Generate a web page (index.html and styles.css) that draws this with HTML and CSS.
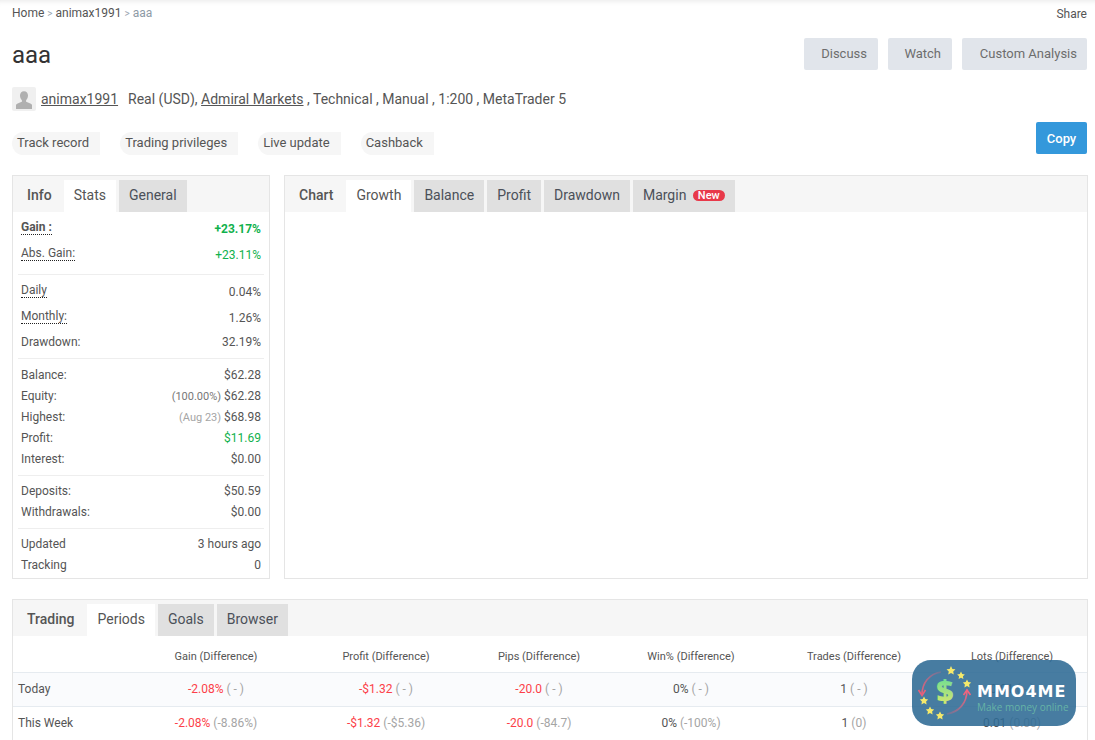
FILE: index.html
```html
<!DOCTYPE html>
<html lang="en">
<head>
<meta charset="utf-8">
<title>aaa</title>
<link rel="stylesheet" href="styles.css">
</head>
<body>
<div class="page">
  <div class="crumbs">
    <div class="crumb-path"><a>Home</a> <span class="sep">&gt;</span> <a>animax1991</a> <span class="sep">&gt;</span> <span class="cur">aaa</span></div>
    <a class="share">Share</a>
  </div>
  <div class="title-row">
    <h1>aaa</h1>
    <div class="actions">
      <button class="btn btn-discuss">Discuss</button>
      <button class="btn btn-watch">Watch</button>
      <button class="btn btn-custom">Custom Analysis</button>
    </div>
  </div>
  <div class="meta">
    <svg class="avatar" viewBox="0 0 24 24" aria-hidden="true">
      <rect width="24" height="24" rx="2" fill="#f0f0f0"/>
      <path d="M12 4.200c2.600 0 4 1.900 4 4.400 0 2-.9 3.700-1.900 4.600v1.600c1.200.7 5 1.500 5.900 3V22H4v-4.200c.9-1.500 4.700-2.300 5.900-3v-1.600C8.900 12.300 8 10.600 8 8.600c0-2.500 1.400-4.400 4-4.400z" fill="#b0b0b0"/>
    </svg>
    <a class="user">animax1991</a>
    <span class="meta-text">Real (USD), <a>Admiral Markets</a> , Technical , Manual , 1:200 , MetaTrader 5</span>
  </div>
  <div class="pill-row">
    <div class="pills">
      <span class="pill">Track record</span>
      <span class="pill">Trading privileges</span>
      <span class="pill">Live update</span>
      <span class="pill">Cashback</span>
    </div>
    <button class="copy">Copy</button>
  </div>
  <div class="main">
    <section class="panel side">
      <div class="tabs">
        <span class="tab label">Info</span>
        <span class="tab active">Stats</span>
        <span class="tab">General</span>
      </div>
      <div class="stats">
        <div class="group first">
          <div class="stat tall"><span class="k dot strong">Gain :</span><span class="v green strong">+23.17%</span></div>
          <div class="stat tall"><span class="k dot">Abs. Gain:</span><span class="v green">+23.11%</span></div>
        </div>
        <div class="group">
          <div class="stat tall"><span class="k dot">Daily</span><span class="v">0.04%</span></div>
          <div class="stat tall"><span class="k dot">Monthly:</span><span class="v">1.26%</span></div>
          <div class="stat mid"><span class="k">Drawdown:</span><span class="v">32.19%</span></div>
        </div>
        <div class="group wide">
          <div class="stat"><span class="k">Balance:</span><span class="v">$62.28</span></div>
          <div class="stat"><span class="k">Equity:</span><span class="v"><span class="soft">(100.00%)</span> $62.28</span></div>
          <div class="stat"><span class="k">Highest:</span><span class="v"><span class="muted small">(Aug 23)</span> $68.98</span></div>
          <div class="stat"><span class="k">Profit:</span><span class="v green">$11.69</span></div>
          <div class="stat"><span class="k">Interest:</span><span class="v">$0.00</span></div>
        </div>
        <div class="group tight">
          <div class="stat"><span class="k">Deposits:</span><span class="v">$50.59</span></div>
          <div class="stat"><span class="k">Withdrawals:</span><span class="v">$0.00</span></div>
        </div>
        <div class="group tight">
          <div class="stat"><span class="k">Updated</span><span class="v">3 hours ago</span></div>
          <div class="stat"><span class="k">Tracking</span><span class="v">0</span></div>
        </div>
      </div>
    </section>
    <section class="panel chart">
      <div class="tabs">
        <span class="tab label">Chart</span>
        <span class="tab active">Growth</span>
        <span class="tab">Balance</span>
        <span class="tab">Profit</span>
        <span class="tab">Drawdown</span>
        <span class="tab">Margin <span class="new">New</span></span>
      </div>
    </section>
  </div>
  <section class="panel bottom">
    <div class="tabs">
      <span class="tab label">Trading</span>
      <span class="tab active">Periods</span>
      <span class="tab">Goals</span>
      <span class="tab">Browser</span>
    </div>
    <table class="periods">
      <thead>
        <tr><th></th><th>Gain (Difference)</th><th>Profit (Difference)</th><th>Pips (Difference)</th><th>Win% (Difference)</th><th>Trades (Difference)</th><th>Lots (Difference)</th></tr>
      </thead>
      <tbody>
        <tr class="alt"><td>Today</td><td><span class="red">-2.08%</span> <span class="muted">( - )</span></td><td><span class="red">-$1.32</span> <span class="muted">( - )</span></td><td><span class="red">-20.0</span> <span class="muted">( - )</span></td><td>0% <span class="muted">( - )</span></td><td>1 <span class="muted">( - )</span></td><td>0.01 <span class="muted">( - )</span></td></tr>
        <tr><td>This Week</td><td><span class="red">-2.08%</span> <span class="muted">(-8.86%)</span></td><td><span class="red">-$1.32</span> <span class="muted">(-$5.36)</span></td><td><span class="red">-20.0</span> <span class="muted">(-84.7)</span></td><td>0% <span class="muted">(-100%)</span></td><td>1 <span class="muted">(0)</span></td><td>0.01 <span class="muted">(0.00)</span></td></tr>
      </tbody>
    </table>
  </section>
</div>
<div class="badge">
  <svg class="badge-icon" viewBox="0 0 66 66" aria-hidden="true">
    <defs>
      <linearGradient id="dollar" x1="0" y1="0" x2="0" y2="1">
        <stop offset="0.1" stop-color="#5fdc9a"/>
        <stop offset="0.9" stop-color="#dfe86a"/>
      </linearGradient>
      <linearGradient id="arcA" x1="1" y1="0" x2="0" y2="1">
        <stop offset="0" stop-color="#e0637c" stop-opacity=".25"/>
        <stop offset="1" stop-color="#e8607a"/>
      </linearGradient>
      <linearGradient id="arcB" x1="0" y1="1" x2="1" y2="0">
        <stop offset="0" stop-color="#e0637c" stop-opacity=".25"/>
        <stop offset="1" stop-color="#f2647e"/>
      </linearGradient>
    </defs>
    <path d="M29 12C17 14 10 23 10 35" fill="none" stroke="url(#arcA)" stroke-width="1.600"/>
    <path d="M6.500 30 10 35.500l3.500-5.500" fill="none" stroke="#e8607a" stroke-width="1.600"/>
    <path d="M35 54c12-2 20-11 20-24" fill="none" stroke="url(#arcB)" stroke-width="1.600"/>
    <path d="M51.500 35 55 30l3.500 5" fill="none" stroke="#f2647e" stroke-width="1.600"/>
    <text class="dollar" x="33" y="42" text-anchor="middle" fill="url(#dollar)">$</text>
    <g fill="#f5e96b">
      <path d="M39 6l1.400 2.900 3.100.4-2.300 2.200.6 3.100-2.800-1.500-2.800 1.500.6-3.100-2.300-2.200 3.100-.4z"/>
      <path d="M49 11.500l1.200 2.500 2.700.4-2 1.900.5 2.700-2.400-1.300-2.400 1.300.5-2.700-2-1.900 2.700-.4z"/>
      <path d="M55 19.500l1.300 2.600 2.900.4-2.100 2 .5 2.900-2.600-1.400-2.600 1.400.5-2.900-2.100-2 2.900-.4z"/>
      <path d="M12 36.500l1.300 2.600 2.900.4-2.100 2 .5 2.900-2.600-1.400-2.600 1.400.5-2.900-2.100-2 2.900-.4z"/>
      <path d="M18 46.500l1.300 2.600 2.900.4-2.100 2 .5 2.900-2.600-1.400-2.600 1.400.5-2.900-2.100-2 2.900-.4z"/>
      <path d="M28 51.500l1.300 2.600 2.900.4-2.100 2 .5 2.900-2.600-1.400-2.600 1.400.5-2.900-2.100-2 2.900-.4z"/>
    </g>
  </svg>
  <div class="badge-text">
    <div class="brand">MMO4ME</div>
    <div class="tag">Make money online</div>
  </div>
</div>
</body>
</html>
```

FILE: styles.css
```css
* { box-sizing: border-box; }
html, body { margin: 0; padding: 0; height: 740px; overflow: hidden; background: #fff; }
body { font-family: Roboto, "Liberation Sans", sans-serif; color: #555; position: relative; }
.page { padding: 0 8px 0 12px; height: 740px; overflow: hidden; box-shadow: inset 0 6px 6px -6px rgba(0,0,0,.12); }
a { color: inherit; }
.crumbs { display: flex; justify-content: space-between; height: 26px; padding-top: 6px; font-size: 12px; line-height: 15px; }
.crumb-path { color: #555; }
.sep { color: #9aa5b1; font-size: 10px; }
.cur { color: #8d9aa6; }
.share { color: #555; padding-top: 1px; }
.title-row { display: flex; justify-content: space-between; height: 50px; padding-top: 12px; }
h1 { margin: 0; font-size: 24px; font-weight: 400; color: #333; line-height: 34px; }
.actions { display: flex; gap: 10px; }
.btn { height: 32px; border: 0; border-radius: 2px; background: #e1e5eb; color: #6d6d6d; font: 400 13px Roboto, sans-serif; padding: 0 11px 2px 0; text-align: right; }
.btn-discuss { width: 74px; }
.btn-watch { width: 64px; }
.btn-custom { width: 125px; padding-right: 10px; }
.meta { display: flex; align-items: center; height: 30px; margin-top: 8px; font-size: 14px; color: #555; }
.avatar { width: 24px; height: 24px; margin-right: 5px; flex: none; }
.user { text-decoration: underline; margin-right: 10px; }
.meta-text a { text-decoration: underline; }
.pill-row { display: flex; justify-content: space-between; height: 32px; margin-top: 10px; }
.pills { display: flex; gap: 20px; padding-top: 8px; }
.pill { height: 23px; line-height: 22px; padding: 0 11px 0 5px; font-size: 13px; background: #f6f6f6; border-radius: 12px 0 0 12px; color: #555; }
.copy { width: 51px; height: 32px; margin-top: -2px; border: 0; border-radius: 2px; background: #3498db; color: #fff; font: 500 13px Roboto, sans-serif; padding: 0; }
.main { display: flex; gap: 14px; margin: 19px -1px 0 0; height: 404px; }
.panel { border: 1px solid #e5e5e5; background: #fff; }
.side { width: 258px; flex: none; }
.chart { flex: 1; }
.tabs { display: flex; gap: 3px; height: 36px; padding-top: 4px; background: #f6f6f6; }
.tab { height: 32px; line-height: 30px; padding: 0 10px; font-size: 14px; background: #e0e0e0; color: #4b5059; white-space: nowrap; }
.tab.label { background: transparent; font-weight: 500; color: #555; padding: 0 13px 0 14px; margin-right: -3px; }
.side .tab.label { padding-right: 12px; }
.tab.active { background: #fff; color: #555; }
.new { display: inline-block; background: #e8394a; color: #fff; font-size: 11px; font-weight: 500; line-height: 11px; padding: 0 5px; border-radius: 6px; margin-left: 3px; vertical-align: 1px; }
.stats { padding: 0 5px; font-size: 12px; }
.group { border-top: 1px solid #eee; padding: 4px 3px 5px; }
.group.first { border-top: 0; padding-top: 4px; padding-bottom: 6px; }
.group.wide { padding: 5px 3px 5px; }
.group.wide .stat:first-child { height: 22px; }
.group.tight { padding: 5px 3px 5px; }
.stat { display: flex; justify-content: space-between; align-items: center; height: 21px; line-height: 15px; }
.stat.tall { height: 26px; }
.stat.mid { height: 22px; }
.dot { border-bottom: 1px dotted #222; line-height: 14px; margin-top: -3px; }
.v { color: #555; }
.strong { font-weight: 700; }
.green { color: #10b14c; }
.muted { color: #a5a5a5; }
.small { font-size: 11px; }
.soft { color: #777; font-size: 11px; }
.red { color: #fc3f49; }
.bottom { margin: 20px -1px 0 0; height: 200px; }
.periods { width: 100%; border-collapse: collapse; font-size: 12px; table-layout: fixed; }
.periods th { font-weight: 400; height: 36px; padding-top: 6px; color: #555; font-size: 11px; border-bottom: 1px solid #e6ebf0; text-align: center; }
.periods td { height: 34px; text-align: center; border-bottom: 1px solid #e6ebf0; color: #555; }
.periods th:nth-child(1), .periods td:nth-child(1) { width: 114px; }
.periods th:nth-child(2), .periods td:nth-child(2) { width: 178px; }
.periods th:nth-child(3), .periods td:nth-child(3) { width: 162px; }
.periods th:nth-child(4), .periods td:nth-child(4) { width: 144px; }
.periods th:nth-child(5), .periods td:nth-child(5) { width: 160px; }
.periods th:nth-child(6), .periods td:nth-child(6) { width: 166px; }
.periods td:first-child { text-align: left; padding-left: 5px; }
.alt td { background: #fafbfd; }
.badge { position: absolute; left: 912px; top: 660px; width: 164px; height: 66px; border-radius: 19px; background: rgba(46,106,148,.88); display: flex; align-items: center; }
.badge-icon { width: 66px; height: 66px; flex: none; }
.dollar { font: 800 30px "Open Sans", sans-serif; }
.badge-text { margin-left: -1px; padding-top: 9px; }
.brand { color: #fff; font: 700 16px/20px "DejaVu Sans", sans-serif; letter-spacing: 1px; }
.tag { color: #66b3a6; font: 400 10px/12px "Open Sans", sans-serif; margin-top: -1px; }
```
